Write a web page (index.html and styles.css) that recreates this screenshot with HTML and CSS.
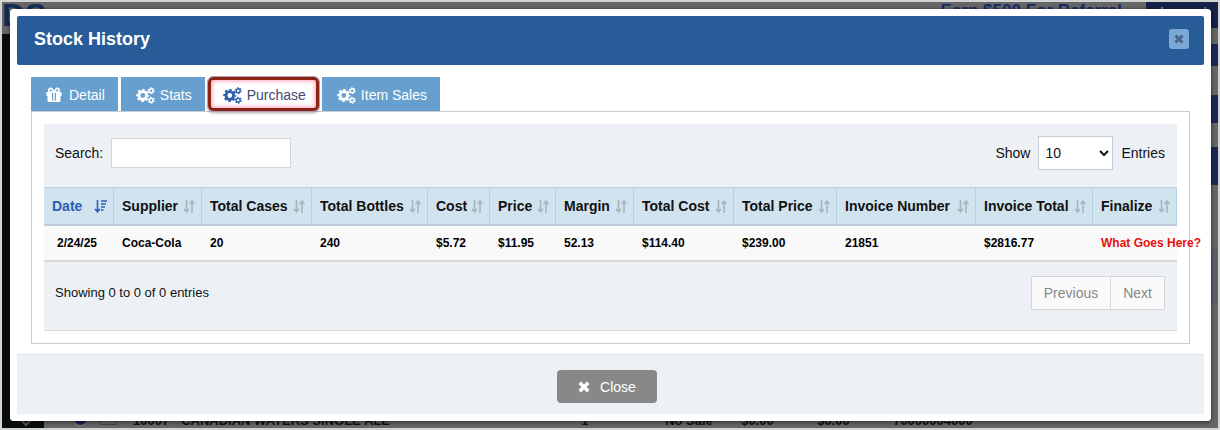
FILE: index.html
```html
<!DOCTYPE html>
<html lang="en">
<head>
<meta charset="utf-8">
<title>Stock History</title>
<link rel="stylesheet" href="styles.css">
</head>
<body>
<svg class="defs" aria-hidden="true">
  <symbol id="cogs" viewBox="0 0 19 17">
    <g fill="none" stroke="currentColor">
      <circle cx="6.8" cy="8.5" r="3.8" stroke-width="2.8"/>
      <circle cx="6.8" cy="8.5" r="5.6" stroke-width="2" stroke-dasharray="2.4 2" stroke-dashoffset="1.2"/>
      <circle cx="15.2" cy="3.7" r="1.9" stroke-width="1.4"/>
      <circle cx="15.2" cy="3.7" r="2.8" stroke-width="1.3" stroke-dasharray="1.5 1.43"/>
      <circle cx="15.2" cy="13.3" r="1.9" stroke-width="1.4"/>
      <circle cx="15.2" cy="13.3" r="2.8" stroke-width="1.3" stroke-dasharray="1.5 1.43"/>
    </g>
  </symbol>
  <symbol id="gift" viewBox="0 0 16 16">
    <path fill="currentColor" d="M1 5h14a.6.6 0 0 1 .6.6V9H.4V5.600A.6.6 0 0 1 1 5zM1.500 9h13v5a1 1 0 0 1-1 1h-11a1 1 0 0 1-1-1z"/>
    <path fill="none" stroke="currentColor" stroke-width="1.700" d="M8 5H4.500a1.800 1.800 0 1 1 1.600-2.800zm0 0h3.500a1.800 1.800 0 1 0-1.600-2.800z"/>
    <path class="ribbon" d="M6 6h1.200v7.500H6zM8.800 6H10v7.500H8.800z"/>
  </symbol>
  <symbol id="times" viewBox="0 0 12 12">
    <path fill="none" stroke="currentColor" stroke-width="3.600" stroke-linecap="square" stroke-linejoin="round" d="M3 3l6 6M9 3l-6 6"/>
  </symbol>
  <symbol id="sort" viewBox="0 0 12 13">
    <path fill="none" stroke="currentColor" stroke-width="1.600" d="M3.500 0v11.500M1 9l2.500 2.800L6 9M9 13V1.500M6.500 4L9 1.200 11.500 4"/>
  </symbol>
  <symbol id="sort-desc" viewBox="0 0 13 13">
    <path fill="none" stroke="currentColor" stroke-width="1.600" d="M3.500 0v11.500M1 9l2.500 2.800L6 9M7 1h6M7 4h5M7 7h4M7 10h2.500"/>
  </symbol>
</svg>

<div class="screen">
  <div class="backdrop" aria-hidden="true">
    <div class="bd-top">
      <span class="bd-logo">DS</span>
      <span class="bd-promo">Earn $500 For Referral</span>
      <span class="bd-login">Logout</span>
    </div>
    <div class="bd-main">
      <div class="bd-side"></div>
      <div class="bd-right">
        <i class="bar b1"></i><i class="bar b2"></i><i class="bar b3"></i><i class="slate"></i>
      </div>
    </div>
    <div class="bd-row">
      <div class="bd-corner"><svg viewBox="0 0 12 8"><path d="M1 1l5 5 5-5" fill="none" stroke="#555" stroke-width="2"/></svg></div>
      <i class="bd-radio"></i><i class="bd-box"></i>
      <span class="bd-num">10007</span><span class="bd-name">CANADIAN WATERS SINGLE ALE</span>
      <span class="bd-type">1</span><span class="bd-size">No Sale</span><span class="bd-price">$0.00</span><span class="bd-price">$0.00</span><span class="bd-code">70000004000</span>
    </div>
  </div>

  <section class="modal" role="dialog" aria-labelledby="title">
    <header class="modal-head">
      <h1 id="title">Stock History</h1>
      <button class="x-btn" type="button" aria-label="Close dialog"><svg><use href="#times"/></svg></button>
    </header>

    <div class="modal-body">
      <nav class="tabs">
        <button type="button" class="tab"><svg class="gift"><use href="#gift"/></svg>Detail</button>
        <button type="button" class="tab"><svg><use href="#cogs"/></svg>Stats</button>
        <button type="button" class="tab active"><svg><use href="#cogs"/></svg>Purchase</button>
        <button type="button" class="tab"><svg><use href="#cogs"/></svg>Item Sales</button>
      </nav>
      <div class="tab-content">
        <div class="panel">
          <div class="tools">
            <label class="field">Search:<input type="text" class="search"></label>
            <label class="field">Show<select class="count"><option>10</option><option>25</option></select>Entries</label>
          </div>
          <table class="grid">
            <colgroup>
              <col class="c-date"><col class="c-supplier"><col class="c-cases"><col class="c-bottles"><col class="c-cost"><col class="c-price"><col class="c-margin"><col class="c-tcost"><col class="c-tprice"><col class="c-number"><col class="c-total"><col class="c-final">
            </colgroup>
            <thead>
              <tr>
                <th class="sorted"><span>Date<svg><use href="#sort-desc"/></svg></span></th>
                <th><span>Supplier<svg><use href="#sort"/></svg></span></th>
                <th><span>Total Cases<svg><use href="#sort"/></svg></span></th>
                <th><span>Total Bottles<svg><use href="#sort"/></svg></span></th>
                <th><span>Cost<svg><use href="#sort"/></svg></span></th>
                <th><span>Price<svg><use href="#sort"/></svg></span></th>
                <th><span>Margin<svg><use href="#sort"/></svg></span></th>
                <th><span>Total Cost<svg><use href="#sort"/></svg></span></th>
                <th><span>Total Price<svg><use href="#sort"/></svg></span></th>
                <th><span>Invoice Number<svg><use href="#sort"/></svg></span></th>
                <th><span>Invoice Total<svg><use href="#sort"/></svg></span></th>
                <th><span>Finalize<svg><use href="#sort"/></svg></span></th>
              </tr>
            </thead>
            <tbody>
              <tr>
                <td class="date">2/24/25</td><td>Coca-Cola</td><td>20</td><td>240</td><td>$5.72</td><td>$11.95</td><td>52.13</td><td>$114.40</td><td>$239.00</td><td>21851</td><td>$2816.77</td><td class="warn">What Goes Here?</td>
              </tr>
            </tbody>
          </table>
          <div class="pager">
            <span class="info">Showing 0 to 0 of 0 entries</span>
            <div class="pages"><button type="button">Previous</button><button type="button">Next</button></div>
          </div>
        </div>
      </div>
    </div>

    <footer class="modal-foot">
      <button type="button" class="close"><svg><use href="#times"/></svg>Close</button>
    </footer>
  </section>
</div>
</body>
</html>
```
FILE: styles.css
```css
* { box-sizing: border-box; }
body {
  margin: 0;
  padding: 2px;
  background: #d2d5d2;
  color: #111;
  font: 14px/20px "Liberation Sans", Arial, sans-serif;
}
button, input, select { font: inherit; }
.defs { position: absolute; width: 0; height: 0; }

.screen {
  display: grid;
  min-height: calc(100vh - 4px);
  background: #666;
}
.backdrop, .modal { grid-area: 1 / 1; min-width: 0; }

/* dimmed page behind the dialog */
.backdrop { display: flex; flex-direction: column; }
.bd-top { display: flex; height: 26px; }
.bd-logo { flex: 1; font: bold 32px/26px "Liberation Sans", Arial, sans-serif; color: #122d54; }
.bd-promo { margin-right: 24px; font: bold 17px/18px "Liberation Sans", Arial, sans-serif; color: #152c63; }
.bd-login { width: 72px; padding-left: 14px; background: #16224a; color: #7c8296; font-weight: bold; }
.bd-main { display: flex; flex: 1; justify-content: space-between; }
.bd-side { width: 42px; margin-top: 6px; background: #0a0d10; }
.bd-right { width: 20px; padding-top: 16px; }
.bar, .slate { display: block; background: #1c2854; }
.b1 { height: 22px; }
.b2 { height: 28px; margin-top: 29px; }
.b3 { height: 38px; margin-top: 24px; }
.slate { height: 55px; margin-top: 64px; background: #596069; }
.bd-row {
  display: flex;
  height: 14px;
  gap: 12px;
  line-height: 14px;
  font-size: 13px;
  align-items: flex-start;
  white-space: nowrap;
  color: #111;
}
.bd-corner { display: flex; align-items: flex-end; justify-content: center; width: 42px; height: 14px; padding: 0 0 1px 6px; background: #0a0d10; }
.bd-corner svg { width: 12px; height: 8px; }
.bd-radio { width: 15px; height: 12px; margin-left: 17px; border: 1px solid #888; border-radius: 0 0 8px 8px; background: #17205c; }
.bd-box { width: 17px; height: 11px; border: 1px solid #444; }
.bd-row span { font-weight: bold; }
.bd-num { margin-left: 4px; }
.bd-name { width: 388px; }
.bd-type { width: 72px; }
.bd-size, .bd-price { width: 64px; }

.modal {
  z-index: 1;
  display: flex;
  flex-direction: column;
  margin: 7px 7px 7px 8px;
  padding: 6px;
  border: 1px solid #fff;
  border-radius: 3px;
  background: #fff;
  box-shadow: 0 1px 4px #0009;
}
.modal-head {
  display: flex;
  align-items: center;
  justify-content: space-between;
  height: 49px;
  padding: 0 15px 3px 17px;
  border-radius: 2px;
  background: #285c99;
  color: #fff;
}
.modal-head h1 { margin: 0; font-size: 18px; line-height: 24px; }
.x-btn {
  display: grid;
  place-items: center;
  width: 20px;
  height: 20px;
  padding: 0;
  border: 0;
  border-radius: 3px;
  background: #7ba9d5;
  color: #476688;
}
.x-btn svg { width: 10px; height: 10px; }

.modal-body { padding: 12px 14px 10px; }
.tabs { display: flex; gap: 3px; }
.tab {
  display: flex;
  align-items: center;
  height: 34px;
  padding: 2px 13px 0 15px;
  border: 0;
  background: #67a0ce;
  color: #fff;
}
.tab svg { width: 19px; height: 17px; margin-right: 5px; }
.tab .gift { width: 16px; height: 16px; margin-right: 7px; }
.ribbon { fill: #67a0ce; }
.tab.active {
  padding: 2px 10px 0 12px;
  border: 3px solid #8c2415;
  border-radius: 5px;
  outline: 1px solid #b69cbc;
  background: #fff;
  color: #414a70;
  box-shadow: 0 2px 3px #0005, inset 0 0 4px 1px #ff9dbb;
}
.tab.active svg { color: #2e61ab; }
.tab-content { padding: 12px; border: 1px solid #c9ccd0; }
.panel { border-bottom: 1px solid #d5d8dc; background: #edf1f6; }
.tools { display: flex; align-items: center; justify-content: space-between; height: 63px; padding: 0 12px 6px 11px; }
.field { display: flex; align-items: center; gap: 8px; }
.search { width: 180px; height: 30px; padding: 4px 8px; border: 1px solid #d3d6da; background: #fff; }
.count { width: 75px; height: 34px; padding: 0 2px; border: 1px solid #c5cdd4; border-radius: 0; background: #fff; color: #111; }

.grid { width: 100%; table-layout: fixed; border-collapse: separate; border-spacing: 0; }
.c-date { width: 70px; }
.c-supplier { width: 88px; }
.c-cases { width: 110px; }
.c-bottles { width: 116px; }
.c-cost { width: 62px; }
.c-price { width: 66px; }
.c-margin { width: 78px; }
.c-tcost { width: 100px; }
.c-tprice { width: 103px; }
.c-number { width: 139px; }
.c-total { width: 117px; }
.c-final { width: 84px; }
.grid th {
  height: 39px;
  padding: 0 6px 0 8px;
  border: solid #b7cfe0;
  border-width: 1px 1px 2px 0;
  border-bottom-color: #bfcadf;
  background: #d1e3ef;
  text-align: left;
  white-space: nowrap;
}
.grid th span { display: flex; align-items: center; justify-content: space-between; }
.grid th svg { width: 12px; height: 13px; flex: none; color: #a6b4be; }
.grid .sorted { color: #2c5db8; }
.grid .sorted svg { width: 13px; color: #2c5db8; }
.grid td {
  height: 36px;
  padding: 0 0 0 8px;
  border-bottom: 2px solid #d6d8da;
  background: #f9f9f9;
  color: #000;
  font-size: 12px;
  line-height: 16px;
  font-weight: bold;
  white-space: nowrap;
}
.grid .date { padding-left: 13px; }
.grid .warn { color: #e81010; }

.pager { display: flex; justify-content: space-between; padding: 14px 12px 20px 11px; }
.info { font-size: 13px; line-height: 34px; }
.pages { display: flex; }
.pages button { height: 34px; padding: 0 12px; border: 1px solid #d3d5d8; background: #fafafa; color: #888; }
.pages button + button { border-left: 0; }

.modal-foot {
  display: flex;
  flex: 1;
  align-items: center;
  justify-content: center;
  min-height: 60px;
  padding: 4px 7px 0 0;
  border-top: 1px solid #dde4ea;
  background: #edf1f6;
}
.close {
  display: flex;
  align-items: center;
  gap: 10px;
  height: 33px;
  padding: 0 21px;
  border: 0;
  border-radius: 4px;
  background: #888;
  color: #fff;
}
.close svg { width: 12px; height: 12px; }
```
